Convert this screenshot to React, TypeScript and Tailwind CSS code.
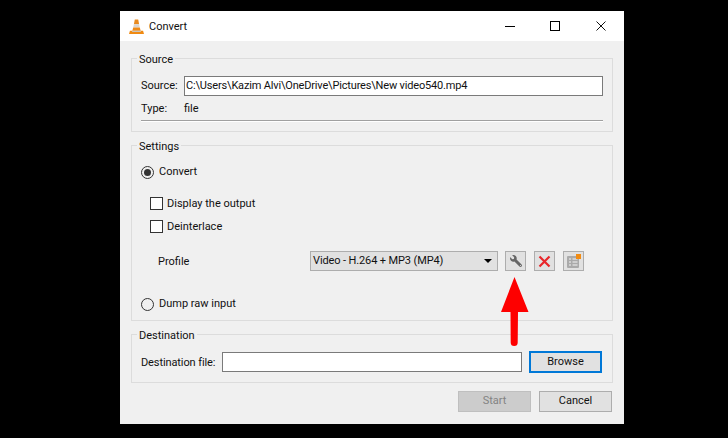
import { FaWrench } from "react-icons/fa"

const Group = ({ title, className, children }: { title: string; className: string; children: React.ReactNode }) => (
  <div className={`border border-[#dcdcdc] ${className}`}>
    <div className="-mt-[8px] ml-[5px] w-fit bg-[#f0f0f0] px-[2px] h-[16px] leading-[16px] pt-px">{title}</div>
    {children}
  </div>
)

const Radio = ({ on, label }: { on?: boolean; label: string }) => (
  <div className="flex items-center gap-[5px] h-[16px]">
    <span className="flex items-center justify-center w-[13px] h-[13px] rounded-full border border-[#333] bg-[#f0f0f0]">
      {on && <span className="w-[7px] h-[7px] rounded-full bg-[#333]" />}
    </span>
    <span className="pt-px">{label}</span>
  </div>
)

const Check = ({ label }: { label: string }) => (
  <div className="flex items-center gap-[4px] h-[16px]">
    <span className="w-[13px] h-[13px] border border-[#333] bg-white" />
    <span className="pt-[2px]">{label}</span>
  </div>
)

const IconButton = ({ children }: { children: React.ReactNode }) => (
  <button className="flex items-center justify-center w-[21px] h-[20px] bg-[#e1e1e1] border border-[#adadad]">
    {children}
  </button>
)

const VlcCone = () => (
  <svg width="15" height="17" viewBox="0 0 16 17">
    <path d="M6.2 1h3.6l1 5H5.2z" fill="#e98a1f" />
    <path d="M5.2 6h5.6l.7 3.5h-7z" fill="#d9d4cf" />
    <path d="M4.5 9.5h7l.9 3.5H3.6z" fill="#ef8a17" />
    <path d="M1 13h14l1 3.5H0z" fill="#f08a12" />
    <path d="M3.6 13h8.8l.5 1.4H3.1z" fill="#c9c4bd" />
  </svg>
)

export default function App() {
  return (
    <div className="w-[728px] h-[438px] bg-black pl-[120px] pt-[11px] text-[11px] text-[#111] overflow-hidden" style={{ fontFamily: 'Roboto, "Noto Sans", sans-serif' }}>
      <div className="relative flex flex-col w-[504px] h-[413px] bg-[#f0f0f0]">
        {/* title bar */}
        <div className="flex items-center h-[30px] bg-white shrink-0 pl-[9px]">
          <VlcCone />
          <span className="ml-[5px] pt-[2px]">Convert</span>
          <div className="ml-auto flex items-center">
            <span className="w-[10px] h-px bg-black mr-[35px]" />
            <span className="w-[10px] h-[10px] border border-black mr-[36px]" />
            <svg width="10" height="10" viewBox="0 0 10 10" className="mr-[18px]">
              <path d="M.5.5l9 9M9.500.5l-9 9" stroke="#111" strokeWidth="1" />
            </svg>
          </div>
        </div>

        <div className="flex flex-col flex-1 px-[11px] pt-[17px]">
          <Group title="Source" className="h-[74px]">
            <div className="px-[9px]">
              <div className="flex items-center mt-[9px] h-[20px]">
                <span className="w-[43px] shrink-0">Source:</span>
                <div className="flex-1 h-[20px] leading-[18px] bg-white border border-[#7a7a7a] pl-px whitespace-nowrap tracking-[-0.17px]">C:\Users\Kazim Alvi\OneDrive\Pictures\New video540.mp4</div>
              </div>
              <div className="flex items-center mt-[3px] h-[20px]">
                <span className="w-[43px] shrink-0">Type:</span>
                <span>file</span>
              </div>
              <div className="mt-[1px] h-[2px] border-t border-[#a0a0a0] bg-white" />
            </div>
          </Group>

          <Group title="Settings" className="h-[176px] mt-[13px]">
            <div className="pl-[9px] pr-[28px]">
              <div className="mt-[10px]"><Radio on label="Convert" /></div>
              <div className="pl-[9px] mt-[15px] flex flex-col gap-[7px]">
                <Check label="Display the output" />
                <Check label="Deinterlace" />
              </div>
              <div className="flex items-center mt-[17px] h-[20px]">
                <span className="pl-[17px] w-[169px] shrink-0 pt-[2px]">Profile</span>
                <div className="flex items-center justify-between w-[188px] h-[20px] bg-[#e1e1e1] border border-[#adadad] pl-[2px] pr-[5px]">
                  <span className="tracking-[-0.12px]">Video - H.264 + MP3 (MP4)</span>
                  <span className="w-0 h-0 border-x-[4px] border-x-transparent border-t-[4px] border-t-black" />
                </div>
                <div className="flex gap-[8px] ml-[7px]">
                  <IconButton><FaWrench className="w-[12px] h-[12px] text-[#666] -scale-x-100" /></IconButton>
                  <IconButton>
                    <svg width="13" height="13" viewBox="0 0 13 13">
                      <path d="M1.5 1.5l10 10M11.5 1.5l-10 10" stroke="#e8262a" strokeWidth="2.2" />
                    </svg>
                  </IconButton>
                  <IconButton>
                    <svg width="15" height="15" viewBox="0 0 15 15">
                      <rect x="1" y="2" width="12" height="12" rx="1" fill="#aaaaaa" />
                      <path d="M3 5h2M3 8h2M3 11h2M6.500 5h5M6.500 8h5M6.500 11h5" stroke="#f4f4f4" strokeWidth="1" />
                      <rect x="10" y="0" width="5" height="5" fill="#f28c13" />
                    </svg>
                  </IconButton>
                </div>
              </div>
              <div className="mt-[25px]"><Radio label="Dump raw input" /></div>
            </div>
          </Group>

          <Group title="Destination" className="h-[49px] mt-[13px]">
            <div className="flex items-center pl-[9px] pr-[10px] mt-[8px] h-[22px]">
              <span className="w-[81px] shrink-0 whitespace-nowrap pt-[2px] tracking-[-0.1px]">Destination file:</span>
              <div className="w-[300px] h-[20px] bg-white border border-[#7a7a7a]" />
              <button className="ml-[7px] w-[73px] h-[22px] bg-[#e1e1e1] border-2 border-[#0078d7]">Browse</button>
            </div>
          </Group>

          <div className="flex justify-end gap-[8px] mt-[8px] pr-px">
            <button className="w-[73px] h-[21px] bg-[#cccccc] border border-[#bfbfbf] text-[#838383]">Start</button>
            <button className="w-[73px] h-[21px] bg-[#e1e1e1] border border-[#adadad]">Cancel</button>
          </div>
        </div>

        {/* red annotation arrow */}
        <svg width="30" height="72" viewBox="0 0 30 72" className="absolute left-[380px] top-[264px]">
          <path d="M14.500 2L28.500 37H18L17.700 67.500a3.500 3.500 0 0 1-7 0L10.500 37H1z" fill="#fe0000" />
        </svg>
      </div>
    </div>
  )
}
